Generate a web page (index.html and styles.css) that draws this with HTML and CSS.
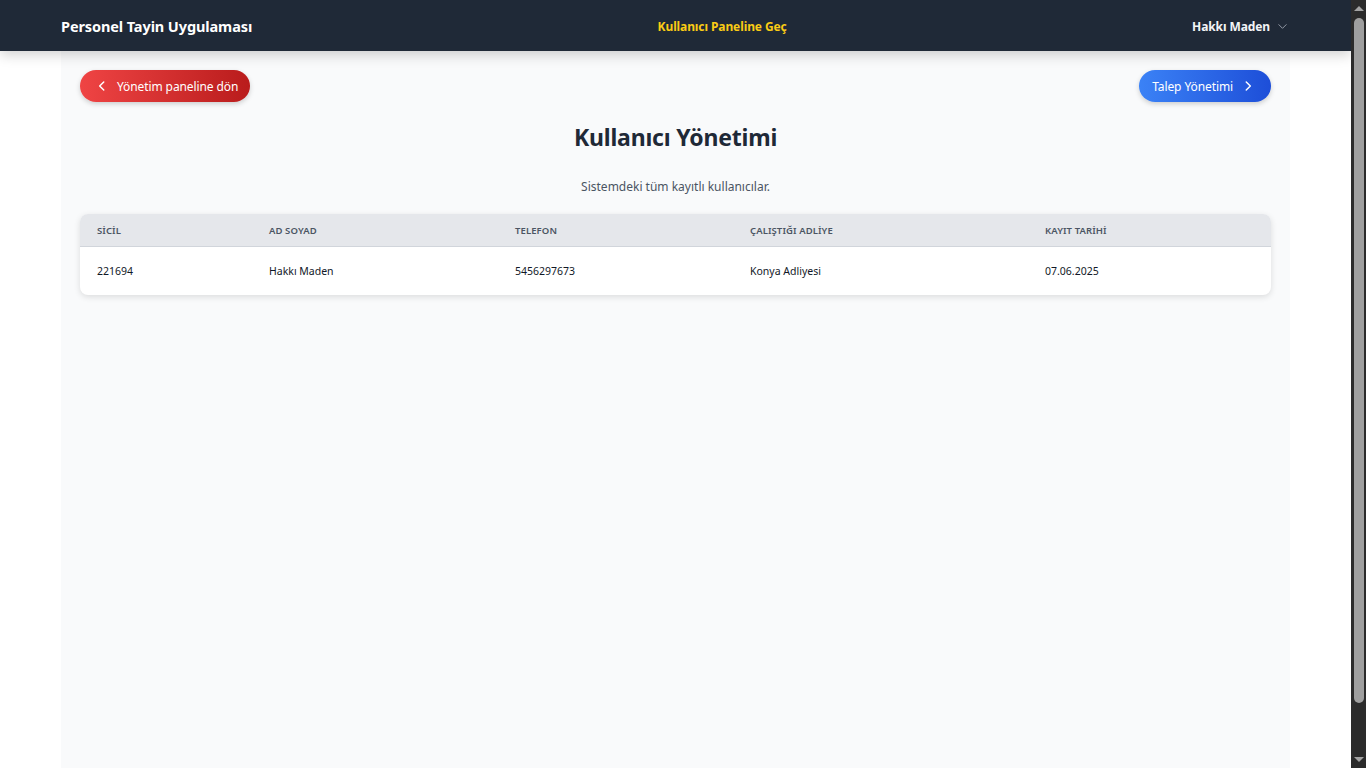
FILE: index.html
```html
<!DOCTYPE html>
<html lang="tr">
<head>
<meta charset="utf-8">
<title>Kullanıcı Yönetimi</title>
<link rel="stylesheet" href="styles.css">
</head>
<body>
<header class="navbar">
  <div class="nav-inner">
    <a class="brand" href="#">Personel Tayin Uygulaması</a>
    <a class="nav-link" href="#">Kullanıcı Paneline Geç</a>
    <div class="user">
      <span>Hakkı Maden</span>
      <svg class="chev-down" width="11" height="11" viewBox="0 0 24 24" fill="none" stroke="currentColor" stroke-width="2" stroke-linecap="round" stroke-linejoin="round"><path d="M4 8l8 8 8-8"/></svg>
    </div>
  </div>
</header>
<main class="container">
  <div class="actions">
    <a class="btn btn-red" href="#">
      <svg width="14" height="14" viewBox="0 0 24 24" fill="none" stroke="currentColor" stroke-width="2.5" stroke-linecap="round" stroke-linejoin="round"><path d="M15 5l-7 7 7 7"/></svg>
      <span>Yönetim paneline dön</span>
    </a>
    <a class="btn btn-blue" href="#">
      <span>Talep Yönetimi</span>
      <svg width="14" height="14" viewBox="0 0 24 24" fill="none" stroke="currentColor" stroke-width="2.5" stroke-linecap="round" stroke-linejoin="round"><path d="M9 5l7 7-7 7"/></svg>
    </a>
  </div>
  <h1 class="title">Kullanıcı Yönetimi</h1>
  <p class="subtitle">Sistemdeki tüm kayıtlı kullanıcılar.</p>
  <div class="table-card">
    <table class="users">
      <colgroup>
        <col class="c1"><col class="c2"><col class="c3"><col class="c4"><col class="c5">
      </colgroup>
      <thead>
        <tr><th>Sicil</th><th>Ad Soyad</th><th>Telefon</th><th>Çalıştığı Adliye</th><th>Kayıt Tarihi</th></tr>
      </thead>
      <tbody>
        <tr><td>221694</td><td>Hakkı Maden</td><td>5456297673</td><td>Konya Adliyesi</td><td>07.06.2025</td></tr>
      </tbody>
    </table>
  </div>
</main>
<div class="scrollbar" aria-hidden="true">
  <span class="sb-arrow sb-up"></span>
  <span class="sb-thumb"></span>
  <span class="sb-arrow sb-down"></span>
</div>
</body>
</html>
```
FILE: styles.css
```css
html {
  background: #ffffff;
}
body {
  margin: 0;
  padding-right: 15px;
  background: #ffffff;
  color: #111827;
  font-family: "Noto Sans", "Open Sans", sans-serif;
}
a { text-decoration: none; }

.navbar {
  background: #1f2937;
  height: 51px;
  box-shadow: 0 4px 12px rgba(0,0,0,0.18);
  position: relative;
  z-index: 2;
}
.nav-inner {
  max-width: 1229px;
  margin: 0 auto;
  height: 100%;
  display: flex;
  align-items: center;
  justify-content: space-between;
}
.brand {
  color: #ffffff;
  font-weight: 700;
  font-size: 14.5px;
  letter-spacing: -0.1px;
  margin-top: 1px;
}
.nav-link {
  color: #facc15;
  font-weight: 700;
  font-size: 12px;
  letter-spacing: -0.1px;
  margin-top: 1px;
}
.user {
  display: flex;
  align-items: center;
  gap: 7px;
  color: #f3f4f6;
  font-weight: 700;
  font-size: 12px;
  letter-spacing: -0.1px;
  padding-right: 2px;
  margin-top: 1px;
}
.chev-down { color: #9ca3af; }

.container {
  max-width: 1229px;
  margin: 0 auto;
  background: #f9fafb;
  padding: 19px 19px 0;
  box-sizing: border-box;
  min-height: 760px;
}
.actions {
  display: flex;
  justify-content: space-between;
  align-items: center;
}
.btn {
  display: inline-flex;
  align-items: center;
  gap: 8px;
  height: 32px;
  box-sizing: border-box;
  border-radius: 9999px;
  color: #ffffff;
  font-size: 12px;
  letter-spacing: -0.1px;
  box-shadow: 0 2px 5px rgba(0,0,0,0.18);
}
.btn-red {
  padding: 0 12px 0 15px;
  background: linear-gradient(90deg, #ef4444, #b91c1c);
}
.btn-blue {
  padding: 0 16px 0 13px;
  background: linear-gradient(90deg, #3b82f6, #1d4ed8);
}

.title {
  text-align: center;
  margin: 20px 0 0;
  font-size: 23px;
  font-weight: 700;
  color: #1f2937;
  line-height: 30px;
  letter-spacing: -0.2px;
}
.subtitle {
  text-align: center;
  margin: 26px 0 0;
  font-size: 12px;
  color: #4b5563;
  line-height: 18px;
}

.table-card {
  margin-top: 18px;
  background: #ffffff;
  border-radius: 8px;
  overflow: hidden;
  box-shadow: 0 2px 6px rgba(0,0,0,0.12);
}
.users {
  width: 100%;
  border-collapse: collapse;
  table-layout: fixed;
}
.c1 { width: 172px; }
.c2 { width: 246px; }
.c3 { width: 235px; }
.c4 { width: 295px; }
.users th {
  background: #e5e7eb;
  text-align: left;
  font-size: 9.5px;
  font-weight: 600;
  text-transform: uppercase;
  color: #4b5563;
  letter-spacing: 0.1px;
  height: 32px;
  padding: 0 0 0 17px;
  border-bottom: 1px solid #d1d5db;
}
.users td {
  height: 48px;
  padding: 0 0 0 17px;
  font-size: 10.5px;
  color: #111827;
}

.scrollbar {
  position: fixed;
  top: 0;
  right: 0;
  width: 15px;
  height: 100vh;
  background: #2b2b2b;
  display: flex;
  flex-direction: column;
  align-items: center;
  z-index: 10;
}
.sb-arrow {
  width: 0;
  height: 0;
  border-left: 5px solid transparent;
  border-right: 5px solid transparent;
}
.sb-up {
  margin-top: 6px;
  border-bottom: 5px solid #a3a3a3;
}
.sb-down {
  margin-bottom: 6px;
  border-top: 5px solid #a3a3a3;
}
.sb-thumb {
  width: 10px;
  flex: 1;
  margin: 7px 0 54px;
  background: #9f9f9f;
  border-radius: 5px;
}
```
